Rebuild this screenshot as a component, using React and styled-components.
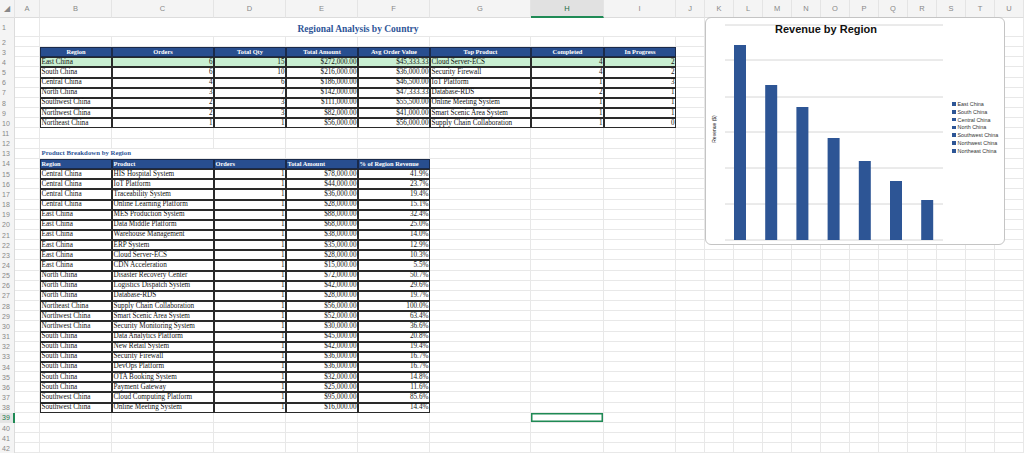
import styled, { createGlobalStyle } from 'styled-components';

const Global = createGlobalStyle`
  html, body { margin: 0; padding: 0; background: #fff; }
  body { width: 1024px; height: 454px; overflow: hidden; }
`;

const LETTERS = 'ABCDEFGHIJKLMNOPQRSTU'.split('');
const COLS = '15px 25px 72px 102px 72px 72px 72px 101px 73px 72px 29px repeat(11, 29px)';
const ROW_H = 10.17;

const top = [
  ['East China', 6, 15, '$272,000.00', '$45,333.33', 'Cloud Server-ECS', 4, 2],
  ['South China', 6, 10, '$216,000.00', '$36,000.00', 'Security Firewall', 4, 2],
  ['Central China', 4, 6, '$186,000.00', '$46,500.00', 'IoT Platform', 1, 3],
  ['North China', 3, 7, '$142,000.00', '$47,333.33', 'Database-RDS', 2, 1],
  ['Southwest China', 2, 3, '$111,000.00', '$55,500.00', 'Online Meeting System', 1, 1],
  ['Northwest China', 2, 3, '$82,000.00', '$41,000.00', 'Smart Scenic Area System', 1, 1],
  ['Northeast China', 1, 1, '$56,000.00', '$56,000.00', 'Supply Chain Collaboration', 1, 0],
];
const topHead = ['Region', 'Orders', 'Total Qty', 'Total Amount', 'Avg Order Value', 'Top Product', 'Completed', 'In Progress'];
const topAlign = ['left', 'right', 'right', 'right', 'right', 'left', 'right', 'right'];

const bottom = [
  ['Central China', 'HIS Hospital System', '$78,000.00', '41.9%'],
  ['Central China', 'IoT Platform', '$44,000.00', '23.7%'],
  ['Central China', 'Traceability System', '$36,000.00', '19.4%'],
  ['Central China', 'Online Learning Platform', '$28,000.00', '15.1%'],
  ['East China', 'MES Production System', '$88,000.00', '32.4%'],
  ['East China', 'Data Middle Platform', '$68,000.00', '25.0%'],
  ['East China', 'Warehouse Management', '$38,000.00', '14.0%'],
  ['East China', 'ERP System', '$35,000.00', '12.9%'],
  ['East China', 'Cloud Server-ECS', '$28,000.00', '10.3%'],
  ['East China', 'CDN Acceleration', '$15,000.00', '5.5%'],
  ['North China', 'Disaster Recovery Center', '$72,000.00', '50.7%'],
  ['North China', 'Logistics Dispatch System', '$42,000.00', '29.6%'],
  ['North China', 'Database-RDS', '$28,000.00', '19.7%'],
  ['Northeast China', 'Supply Chain Collaboration', '$56,000.00', '100.0%'],
  ['Northwest China', 'Smart Scenic Area System', '$52,000.00', '63.4%'],
  ['Northwest China', 'Security Monitoring System', '$30,000.00', '36.6%'],
  ['South China', 'Data Analytics Platform', '$45,000.00', '20.8%'],
  ['South China', 'New Retail System', '$42,000.00', '19.4%'],
  ['South China', 'Security Firewall', '$36,000.00', '16.7%'],
  ['South China', 'DevOps Platform', '$36,000.00', '16.7%'],
  ['South China', 'OTA Booking System', '$32,000.00', '14.8%'],
  ['South China', 'Payment Gateway', '$25,000.00', '11.6%'],
  ['Southwest China', 'Cloud Computing Platform', '$95,000.00', '85.6%'],
  ['Southwest China', 'Online Meeting System', '$16,000.00', '14.4%'],
];
const botHead = ['Region', 'Product', 'Orders', 'Total Amount', '% of Region Revenue'];

const Sheet = styled.div`
  position: relative;
  display: grid;
  grid-template-columns: ${COLS};
  grid-template-rows: 18px 19px repeat(41, ${ROW_H}px);
  width: 1024px;
  height: 454px;
  overflow: hidden;
  font-family: 'Liberation Serif', 'DejaVu Serif', serif;
`;

const ColHead = styled.div`
  display: flex;
  align-items: center;
  justify-content: center;
  font-family: 'Liberation Sans', Arial, sans-serif;
  font-size: 7.5px;
  color: ${p => (p.$sel ? '#1e6e45' : '#888')};
  background: ${p => (p.$sel ? '#e1e1e1' : '#f4f4f4')};
  border-right: 1px solid #e4e4e4;
  border-bottom: ${p => (p.$sel ? '2px solid #1f8a55' : '1px solid #dcdcdc')};
  box-sizing: border-box;
`;

const RowNum = styled.div`
  display: flex;
  align-items: center;
  padding-left: 2px;
  font-family: 'Liberation Sans', Arial, sans-serif;
  font-size: 7px;
  color: ${p => (p.$sel ? '#1e7a4c' : '#888')};
  background: ${p => (p.$sel ? '#e4e4e4' : '#f4f4f4')};
  border-right: ${p => (p.$sel ? '2px solid #1f8a55' : '1px solid #dcdcdc')};
  box-sizing: border-box;
`;

const Cell = styled.div`
  display: flex;
  align-items: center;
  justify-content: ${p => (p.$align === 'right' ? 'flex-end' : p.$align === 'center' ? 'center' : 'flex-start')};
  grid-column: span ${p => p.$span || 1};
  padding: 0 1.5px;
  box-sizing: border-box;
  font-size: 7.2px;
  line-height: 1;
  white-space: nowrap;
  overflow: visible;
  color: #111;
  border-right: 1px solid #e8e8e8;
  border-bottom: 1px solid #e8e8e8;
  min-width: 0;
`;

const DataCell = styled(Cell)`
  border: none;
  box-shadow: inset 0 0 0 1px #2a2a2a;
  background: ${p => (p.$hl ? '#c9efd2' : '#fff')};
  overflow: hidden;
`;

const HeadCell = styled(DataCell)`
  background: #284e8f;
  color: #fff;
  font-weight: bold;
  font-size: 6.4px;
  box-shadow: inset 0 0 0 1px #1a2a4a;
`;

const Title = styled(Cell)`
  font-size: 9.5px;
  color: #2e5597;
  font-weight: bold;
  padding-top: 5px;
  border-right: none;
`;

const SubTitle = styled(Cell)`
  font-size: 6.8px;
  color: #2e5597;
  font-weight: bold;
  border-right: none;
`;

const Selected = styled(Cell)`
  box-shadow: inset 0 0 0 1.5px #1f8a55;
`;

const Chart = styled.div`
  position: absolute;
  left: 705px;
  top: 17px;
  width: 300px;
  height: 228px;
  background: #fff;
  border: 1px solid #c4c4c4;
  border-radius: 6px;
  box-sizing: border-box;
  font-family: 'Liberation Sans', Arial, sans-serif;
`;

const ChartTitle = styled.div`
  position: absolute;
  top: 5px;
  left: 0;
  width: 240px;
  text-align: center;
  font-size: 11px;
  font-weight: bold;
  color: #111;
`;

const Legend = styled.div`
  position: absolute;
  left: 246px;
  top: 83px;
  display: flex;
  flex-direction: column;
  gap: 1.8px;
  font-size: 5.4px;
  color: #333;
`;

const LegendItem = styled.div`
  display: flex;
  align-items: center;
  gap: 2px;
  &::before {
    content: '';
    width: 3.5px;
    height: 3.5px;
    background: #2d5595;
  }
`;

const YLabel = styled.div`
  position: absolute;
  left: -6px;
  top: 108px;
  transform: rotate(-90deg);
  font-size: 5px;
  color: #111;
`;

const regions = top.map(r => r[0]);
const bars = [44, 84, 106, 137, 160, 180, 199];

function rowCells(r) {
  const out = [];
  if (r === 1) {
    out.push(<Cell key="a" />);
    out.push(<Title key="t" $span={8} $align="center">Regional Analysis by Country</Title>);
    for (let c = 9; c < 21; c++) out.push(<Cell key={c} />);
    return out;
  }
  if (r === 13) {
    out.push(<Cell key="a" />, <SubTitle key="t" $span={2}>Product Breakdown by Region</SubTitle>);
    for (let c = 3; c < 21; c++) out.push(<Cell key={c} />);
    return out;
  }
  for (let c = 0; c < 21; c++) {
    let el = null;
    if (r === 3 && c >= 1 && c <= 8) {
      el = <HeadCell key={c} $align="center">{topHead[c - 1]}</HeadCell>;
    } else if (r >= 4 && r <= 10 && c >= 1 && c <= 8) {
      el = (
        <DataCell key={c} $align={topAlign[c - 1]} $hl={r === 4}>
          {top[r - 4][c - 1]}
        </DataCell>
      );
    } else if (r === 14 && c >= 1 && c <= 5) {
      el = <HeadCell key={c}>{botHead[c - 1]}</HeadCell>;
    } else if (r >= 15 && r <= 38 && c >= 1 && c <= 5) {
      const d = bottom[r - 15];
      const vals = [d[0], d[1], 1, d[2], d[3]];
      el = (
        <DataCell key={c} $align={c >= 3 ? 'right' : 'left'}>
          {vals[c - 1]}
        </DataCell>
      );
    } else if (r === 39 && c === 7) {
      el = <Selected key={c} />;
    } else {
      el = <Cell key={c} />;
    }
    out.push(el);
  }
  return out;
}

const App = () => {
  const rows = [];
  for (let r = 1; r <= 42; r++) {
    rows.push(<RowNum key={'n' + r} $sel={r === 39}>{r}</RowNum>);
    rows.push(...rowCells(r).map((el, i) => ({ ...el, key: r + '-' + i })));
  }
  return (
    <>
      <Global />
      <Sheet>
        <ColHead>◢</ColHead>
        {LETTERS.map(l => (
          <ColHead key={l} $sel={l === 'H'}>{l}</ColHead>
        ))}
        {rows}
        <Chart>
          <svg width="300" height="228" style={{ position: 'absolute', left: 0, top: 0 }}>
            {[24, 59, 96, 131, 167, 203, 239].map(y => (
              <line key={y} x1="19" x2="237" y1={y - 17} y2={y - 17} stroke="#d6d6d6" strokeWidth="1" />
            ))}
            {bars.map((t, i) => (
              <rect key={i} x={28 + i * 31.2} y={t - 17} width="12" height={239 - t} fill="#2d5595" />
            ))}
          </svg>
          <ChartTitle>Revenue by Region</ChartTitle>
          <YLabel>Revenue ($)</YLabel>
          <Legend>
            {regions.map(r => (
              <LegendItem key={r}>{r}</LegendItem>
            ))}
          </Legend>
        </Chart>
      </Sheet>
    </>
  );
};

export default App;
